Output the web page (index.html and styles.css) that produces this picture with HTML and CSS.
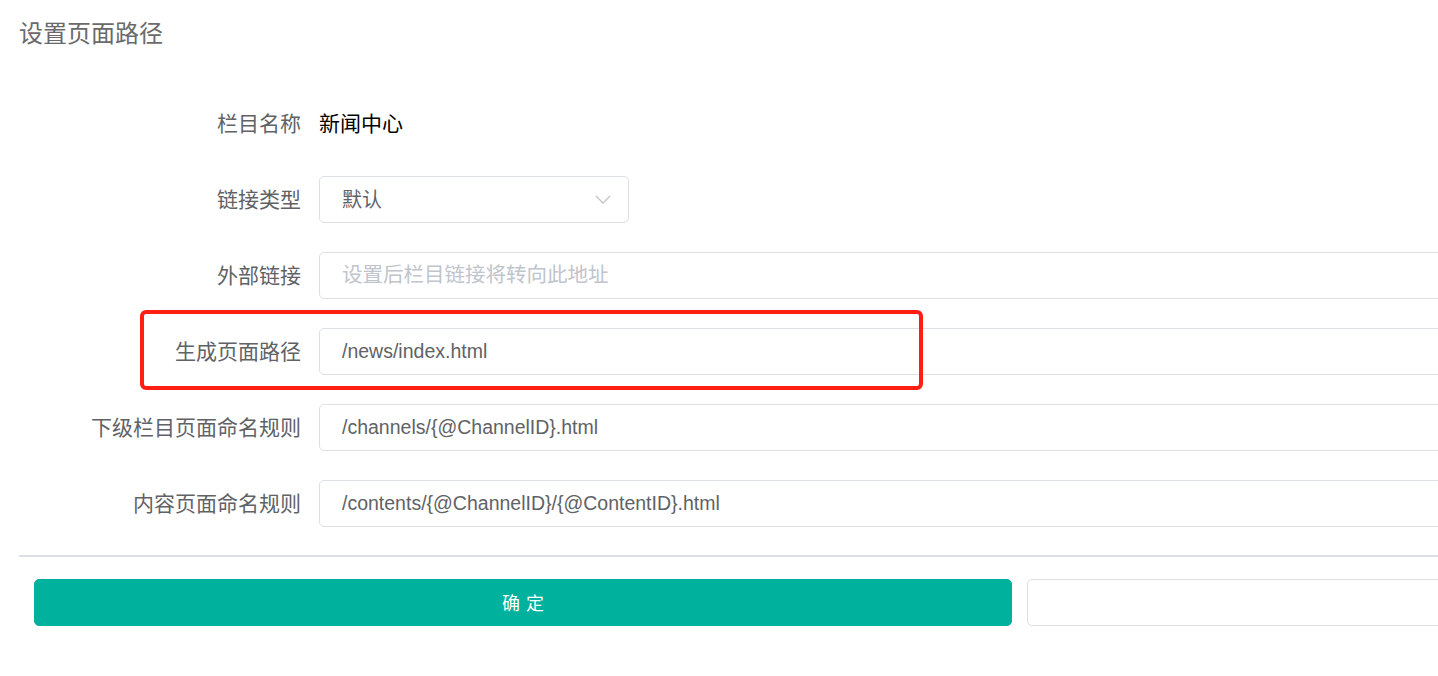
FILE: index.html
```html
<!DOCTYPE html>
<html lang="zh-CN">
<head>
  <meta charset="UTF-8" />
  <title>设置页面路径</title>
  <link rel="stylesheet" href="styles.css">
</head>
<body>

  <div class="page">
    <h2 class="title">设置页面路径</h2>

    <form class="form">
      <div class="form-item">
        <label class="form-label">栏目名称</label>
        <div class="form-content">
          <span class="static-value">新闻中心</span>
        </div>
      </div>

      <div class="form-item">
        <label class="form-label">链接类型</label>
        <div class="form-content">
          <div class="select">
            <span class="select-value">默认</span>
            <svg class="select-arrow" width="16" height="9" viewBox="0 0 16 9">
              <polyline points="1,1 8,8 15,1" fill="none" stroke="#c0c4cc" stroke-width="1.3" />
            </svg>
          </div>
        </div>
      </div>

      <div class="form-item">
        <label class="form-label">外部链接</label>
        <div class="form-content">
          <input type="text" class="input" placeholder="设置后栏目链接将转向此地址" />
        </div>
      </div>

      <div class="form-item">
        <label class="form-label">生成页面路径</label>
        <div class="form-content">
          <input type="text" class="input" value="/news/index.html" />
        </div>
      </div>

      <div class="form-item">
        <label class="form-label">下级栏目页面命名规则</label>
        <div class="form-content">
          <input type="text" class="input" value="/channels/{@ChannelID}.html" />
        </div>
      </div>

      <div class="form-item">
        <label class="form-label">内容页面命名规则</label>
        <div class="form-content">
          <input type="text" class="input" value="/contents/{@ChannelID}/{@ContentID}.html" />
        </div>
      </div>
    </form>

    <div class="divider"></div>

    <div class="actions">
      <button type="button" class="btn btn-primary">确定</button>
      <button type="button" class="btn btn-default"></button>
    </div>

    <!-- annotation box -->
    <div class="highlight"></div>
  </div>

</body>
</html>
```

FILE: styles.css
```css
html, body {
  margin: 0;
  overflow: hidden;
  background-color: #fff;
}
body {
  font-family: 'Liberation Sans', 'Noto Sans CJK SC', sans-serif;
  color: #606266;
}
.page {
  position: relative;
  width: 2020px;
  box-sizing: border-box;
  padding: 19px 0 0 19px;
}
.title {
  margin: 0 0 51px;
  font-size: 24px;
  line-height: 30px;
  font-weight: normal;
  color: #6a6a6a;
}
.form-item {
  display: flex;
  align-items: center;
  height: 47px;
  margin-bottom: 29px;
}
.form-item:last-child {
  margin-bottom: 0;
}
.form-label {
  flex: none;
  width: 282px;
  padding: 0 18px 4px 0;
  text-align: right;
  font-size: 21px;
  color: #606266;
}
.form-content {
  flex: 1;
  display: flex;
  align-items: center;
  height: 100%;
}
.static-value {
  padding-bottom: 4px;
  font-size: 21px;
  color: #000;
}
.select {
  width: 310px;
  height: 47px;
  box-sizing: border-box;
  display: flex;
  align-items: center;
  justify-content: space-between;
  padding: 0 17px 0 22px;
  border: 1px solid #dcdfe6;
  border-radius: 5px;
  font-size: 20px;
  color: #606266;
}
.select-value {
  padding-bottom: 3px;
}
.input {
  width: 100%;
  height: 47px;
  box-sizing: border-box;
  padding: 0 22px;
  border: 1px solid #dcdfe6;
  border-radius: 5px;
  outline: none;
  font-family: 'Liberation Sans', 'Noto Sans CJK SC', sans-serif;
  font-size: 19.5px;
  color: #606266;
  background-color: #fff;
}
.input::placeholder {
  font-size: 20.5px;
  color: #c0c4cc;
}
.divider {
  height: 2px;
  margin: 28px 0 22px;
  background-color: #dcdfe6;
}
.actions {
  display: flex;
  gap: 15px;
  padding: 0 15px;
}
.btn {
  flex: 1;
  height: 47px;
  box-sizing: border-box;
  border-radius: 5px;
  font-family: 'Liberation Sans', 'Noto Sans CJK SC', sans-serif;
  font-size: 18px;
  cursor: pointer;
}
.btn-primary {
  padding-bottom: 3px;
  background-color: #00b19d;
  border: 1px solid #00b19d;
  color: #fff;
  letter-spacing: 6px;
  text-indent: 6px;
}
.btn-default {
  background-color: #fff;
  border: 1px solid #dcdfe6;
}
.highlight {
  position: absolute;
  left: 140px;
  top: 310px;
  width: 783px;
  height: 80px;
  box-sizing: border-box;
  border: 4px solid #ff1f12;
  border-radius: 6px;
}
```
